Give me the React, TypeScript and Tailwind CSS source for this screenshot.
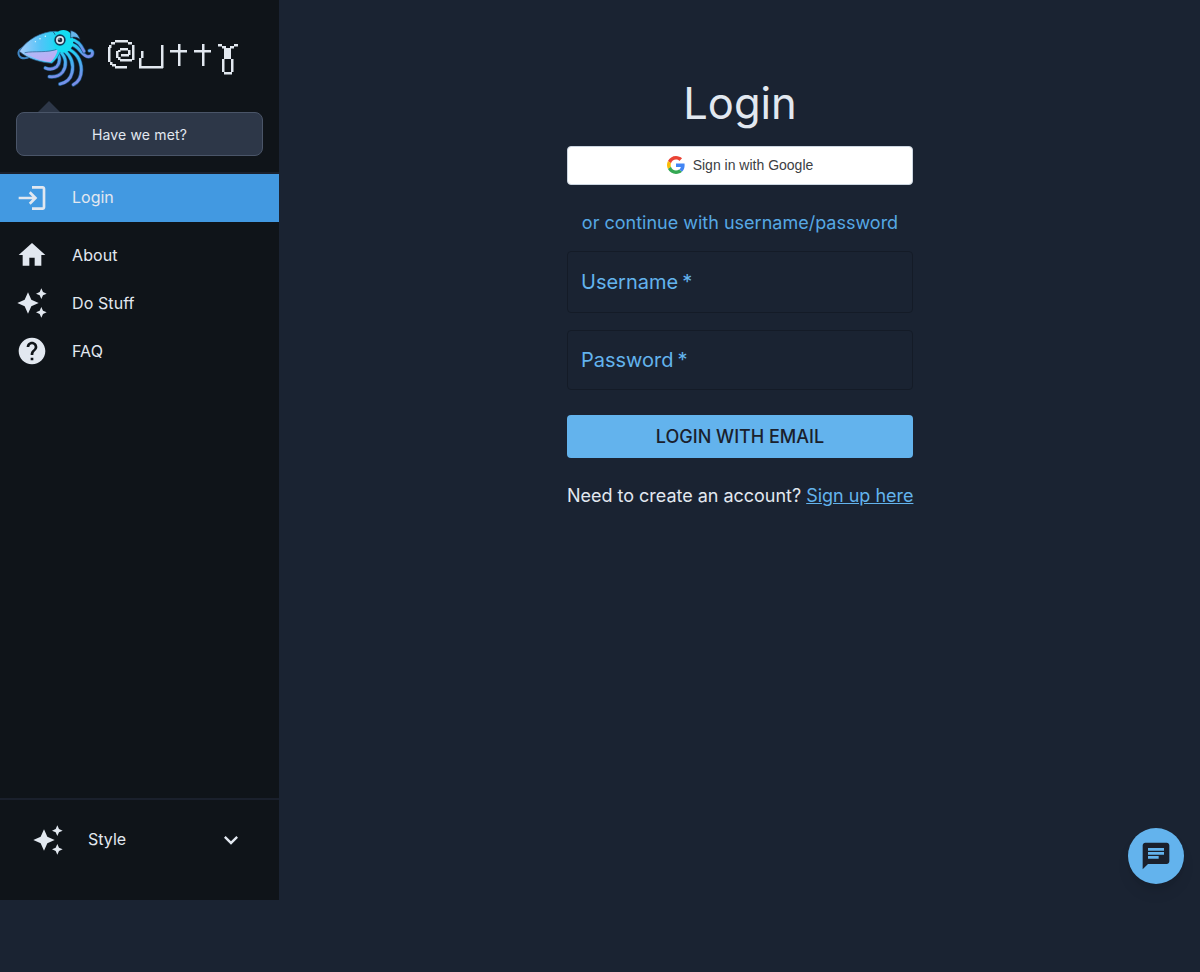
import React from "react";

const P = {
  login: "M11 7 9.6 8.4l2.6 2.6H2v2h10.2l-2.6 2.6L11 17l5-5-5-5zm9 12h-8v2h8c1.1 0 2-.9 2-2V5c0-1.1-.9-2-2-2h-8v2h8v14z",
  home: "M10 20v-6h4v6h5v-8h3L12 3 2 12h3v8z",
  sparkle: "M19 9l1.25-2.75L23 5l-2.75-1.25L19 1l-1.25 2.75L15 5l2.75 1.25L19 9zm-7.5.5L9 4 6.5 9.5 1 12l5.5 2.5L9 20l2.5-5.5L17 12l-5.5-2.5zM19 15l-1.25 2.75L15 19l2.75 1.25L19 23l1.25-2.75L23 19l-2.75-1.25L19 15z",
  help: "M12 2C6.48 2 2 6.48 2 12s4.48 10 10 10 10-4.48 10-10S17.52 2 12 2zm1 17h-2v-2h2v2zm2.07-7.75l-.9.92C13.45 12.9 13 13.5 13 15h-2v-.5c0-1.1.45-2.1 1.17-2.83l1.24-1.26c.37-.36.59-.86.59-1.41 0-1.1-.9-2-2-2s-2 .9-2 2H8c0-2.21 1.79-4 4-4s4 1.79 4 4c0 .88-.36 1.68-.93 2.25z",
  chevron: "M16.59 8.59L12 13.17 7.41 8.59 6 10l6 6 6-6z",
  chat: "M20 2H4c-1.1 0-1.99.9-1.99 2L2 22l4-4h14c1.1 0 2-.9 2-2V4c0-1.1-.9-2-2-2zM6 9h12v2H6V9zm8 5H6v-2h8v2zm4-6H6V6h12v2z",
};

function Icon({ d, className }: { d: string; className?: string }) {
  return (
    <svg viewBox="0 0 24 24" className={className} fill="currentColor">
      <path d={d} />
    </svg>
  );
}

function Squid() {
  const tentacles = [
    "M176 72 C206 70 216 112 236 110 C252 108 250 88 238 92",
    "M172 86 C198 96 214 120 214 150 C214 170 206 186 190 194",
    "M164 92 C182 108 192 132 186 158 C182 176 170 188 150 192",
    "M152 96 C170 114 170 138 158 156 C150 166 136 172 118 170",
    "M140 96 C152 110 150 130 140 140 C130 148 120 150 106 144",
    "M180 58 C204 60 214 76 222 94",
  ];
  return (
    <svg viewBox="0 0 270 210" className="h-[70px] w-[90px] shrink-0 blur-[0.4px]">
      <defs>
        <linearGradient id="mantle" x1="0" y1="0.2" x2="1" y2="0.2">
          <stop offset="0" stopColor="#a6cbfa" />
          <stop offset="0.5" stopColor="#52c4f8" />
          <stop offset="1" stopColor="#12dcf2" />
        </linearGradient>
        <linearGradient id="tent" x1="0" y1="0" x2="0.3" y2="1">
          <stop offset="0" stopColor="#18e0f2" />
          <stop offset="0.55" stopColor="#3fb4f0" />
          <stop offset="1" stopColor="#7a8ee8" />
        </linearGradient>
        <linearGradient id="belly" x1="0" y1="0" x2="0.6" y2="1">
          <stop offset="0" stopColor="#a4c0f8" />
          <stop offset="1" stopColor="#c4a8f4" />
        </linearGradient>
      </defs>
      <path d="M50 80 C32 82 20 94 28 108 C34 118 50 116 60 110" fill="none" stroke="#3f86c4" strokeWidth="6" />
      {tentacles.map((d, i) => (
        <g key={i}>
          <path d={d} fill="none" stroke="#1a5688" strokeWidth="12" strokeLinecap="round" />
          <path d={d} fill="none" stroke="url(#tent)" strokeWidth="8" strokeLinecap="round" />
        </g>
      ))}
      <path d="M28 94 C50 58 96 34 136 34 C154 34 162 58 154 88 C148 106 138 120 126 130 C96 128 54 118 28 94 Z" fill="url(#mantle)" stroke="#2a5a8a" strokeWidth="2" />
      <path d="M44 98 C74 92 112 100 144 88 C140 104 132 118 122 126 C96 124 66 114 44 98 Z" fill="url(#belly)" />
      <path d="M44 98 C74 92 112 100 146 86" fill="none" stroke="#2a5a8a" strokeWidth="2" />
      <path d="M130 36 C142 50 146 70 145 88" fill="none" stroke="#1c4269" strokeWidth="2.5" />
      <ellipse cx="160" cy="64" rx="30" ry="34" fill="#14dcf2" />
      <path d="M182 32 C196 34 206 44 210 58 C198 50 190 50 182 54 Z" fill="#67b6ec" stroke="#1b3a5e" strokeWidth="2" />
      <circle cx="150" cy="60" r="17" fill="#143655" />
      <circle cx="150" cy="60" r="12" fill="#dfe7ef" />
      <circle cx="150" cy="60" r="7" fill="#1a2a3c" />
      <circle cx="147" cy="57" r="2" fill="#fff" />
      <circle cx="90" cy="56" r="2.2" fill="#e6fbff" />
      <circle cx="106" cy="49" r="2.2" fill="#e6fbff" />
      <circle cx="76" cy="65" r="1.8" fill="#e6fbff" />
    </svg>
  );
}

function Wordmark() {
  const r: [number, number, number, number][] = [
    // @ outer spiral
    [15, 10, 13, 2.5], [11, 12, 4, 2.5], [28, 12, 4, 2.5], [9, 15, 2.5, 3],
    [8, 17, 2.5, 15], [32, 15, 2.5, 15], [10, 32, 2.5, 3], [12, 34, 4, 2.5], [15, 36, 12, 2.5],
    // @ inner
    [20, 18, 8, 2.5], [18, 20, 2.5, 2], [16, 21, 2.5, 7], [18, 27, 2.5, 3], [20, 29, 12, 2.5],
    [21, 24, 8, 2.5], [28, 20, 2.5, 5],
    // u
    [41, 21, 2.5, 7], [39, 28, 2.5, 10], [39, 36, 24, 2.5], [61, 15, 2.5, 23],
    // t
    [70, 20, 17, 2.5], [78, 14, 2.5, 22],
    // t
    [94, 20, 17, 2.5], [102, 14, 2.5, 22],
    // y
    [118, 14, 4, 2.5], [122, 16, 4, 2.5], [134, 14, 4, 2.5], [130, 16, 4, 2.5],
    [124, 18, 7, 11], [122, 29, 2.5, 13], [131, 29, 2.5, 13],
    [124, 42, 8, 2.5],
  ];
  return (
    <svg viewBox="0 0 145 50" className="mt-[10px] h-[50px] w-[145px] shrink-0 blur-[0.4px]" fill="#e2e8f0" role="img" aria-label="@utty">
      {r.map(([x, y, w, h], i) => (
        <rect key={i} x={x} y={y} width={w} height={h} />
      ))}
    </svg>
  );
}

function GoogleG() {
  return (
    <svg viewBox="0 0 48 48" className="h-[18px] w-[18px]">
      <path fill="#EA4335" d="M24 9.5c3.54 0 6.71 1.22 9.21 3.6l6.85-6.85C35.9 2.38 30.47 0 24 0 14.62 0 6.51 5.38 2.56 13.22l7.98 6.19C12.43 13.72 17.74 9.5 24 9.5z" />
      <path fill="#4285F4" d="M46.98 24.55c0-1.57-.15-3.09-.38-4.55H24v9.02h12.94c-.58 2.96-2.26 5.48-4.78 7.18l7.73 6c4.51-4.18 7.09-10.36 7.09-17.65z" />
      <path fill="#FBBC05" d="M10.53 28.59c-.48-1.45-.76-2.99-.76-4.59s.27-3.14.76-4.59l-7.98-6.19C.92 16.46 0 20.12 0 24c0 3.88.92 7.54 2.56 10.78l7.97-6.19z" />
      <path fill="#34A853" d="M24 48c6.48 0 11.93-2.13 15.89-5.81l-7.73-6c-2.15 1.45-4.92 2.3-8.16 2.3-6.26 0-11.57-4.22-13.47-9.91l-7.98 6.19C6.51 42.62 14.62 48 24 48z" />
    </svg>
  );
}

function NavItem({ d, label }: { d: string; label: string }) {
  return (
    <div className="flex h-12 items-center pl-4 text-[#e2e8f0]">
      <Icon d={d} className="h-8 w-8 shrink-0" />
      <span className="ml-6 text-base tracking-[0.1px]">{label}</span>
    </div>
  );
}

function Field({ label, className }: { label: string; className: string }) {
  return (
    <div className={`flex items-center rounded border border-[#141b27] pl-[13px] pb-[1px] text-[20px] text-[#63b3ed] ${className}`}>
      {label}
      <span className="ml-[4px]">*</span>
    </div>
  );
}

export default function App() {
  return (
    <div className="relative flex h-[972px] items-start bg-[#1a2332] font-['Inter',sans-serif]">
      <aside className="flex h-[900px] w-[279px] shrink-0 flex-col bg-[#0f1419]">
        <div className="flex h-[101px] shrink-0 pl-[10px] pt-[20px]">
          <Squid />
          <Wordmark />
        </div>
        <div className="relative mx-4 mt-[11px] flex h-11 items-center justify-center rounded-lg border border-[#4a5568] bg-[#2d3748] pt-[2px] text-sm tracking-[0.15px] text-[#e2e8f0]">
          <span className="absolute left-[21px] top-[-12px] h-0 w-0 border-x-[11px] border-b-[11px] border-x-transparent border-b-[#2d3748]" />
          Have we met?
        </div>
        <div className="mt-4 h-[2px] shrink-0 bg-[#1a202c]" />
        <div className="flex h-12 shrink-0 items-center bg-[#4299e1] pl-4 text-[#e2e8f0]">
          <Icon d={P.login} className="h-8 w-8 shrink-0" />
          <span className="ml-6 pb-[2px] text-base">Login</span>
        </div>
        <div className="mt-[9px] flex flex-col">
          <NavItem d={P.home} label="About" />
          <NavItem d={P.sparkle} label="Do Stuff" />
          <NavItem d={P.help} label="FAQ" />
        </div>
        <div className="mt-auto flex h-[102px] shrink-0 items-start border-t-2 border-[#1a202c] pl-8 pr-[34px] pt-6 text-[#e2e8f0]">
          <div className="flex h-8 w-full items-center">
            <Icon d={P.sparkle} className="h-8 w-8 shrink-0" />
            <span className="ml-[24px] flex-1 pb-[2px] text-base">Style</span>
            <Icon d={P.chevron} className="h-7 w-7 shrink-0" />
          </div>
        </div>
      </aside>
      <main className="flex flex-1 flex-col items-center pl-px">
        <div className="flex w-[346px] flex-col">
          <h1 className="mt-[75px] h-[56px] text-center text-[43.5px] leading-[56px] text-[#e2e8f0]">Login</h1>
          <div className="mt-[15px] flex h-[39px] items-center justify-center gap-2 rounded border border-[#cbd5e0] bg-white pb-[1px] font-['Liberation_Sans',sans-serif] text-sm text-[#3c4043]">
            <GoogleG />
            <span>Sign in with Google</span>
          </div>
          <p className="mt-[24px] text-center text-lg leading-[27px] text-[#56a8e4]">or continue with username/password</p>
          <Field label="Username" className="mt-[15px] h-[62px]" />
          <Field label="Password" className="mt-[17px] h-[60px]" />
          <div className="mt-[25px] flex h-[43px] items-center justify-center rounded bg-[#63b3ed] text-lg font-medium text-[#1a202c]">LOGIN WITH EMAIL</div>
          <p className="mt-[24px] whitespace-nowrap text-lg leading-[27px] tracking-[-0.02px] text-[#e2e8f0]">
            Need to create an account? <a className="text-[#63b3ed] underline">Sign up here</a>
          </p>
        </div>
      </main>
      <button className="absolute bottom-[88px] right-4 flex h-14 w-14 items-center justify-center rounded-full bg-[#63b3ed] text-[#1a202c] shadow-lg">
        <Icon d={P.chat} className="h-8 w-8" />
      </button>
    </div>
  );
}
